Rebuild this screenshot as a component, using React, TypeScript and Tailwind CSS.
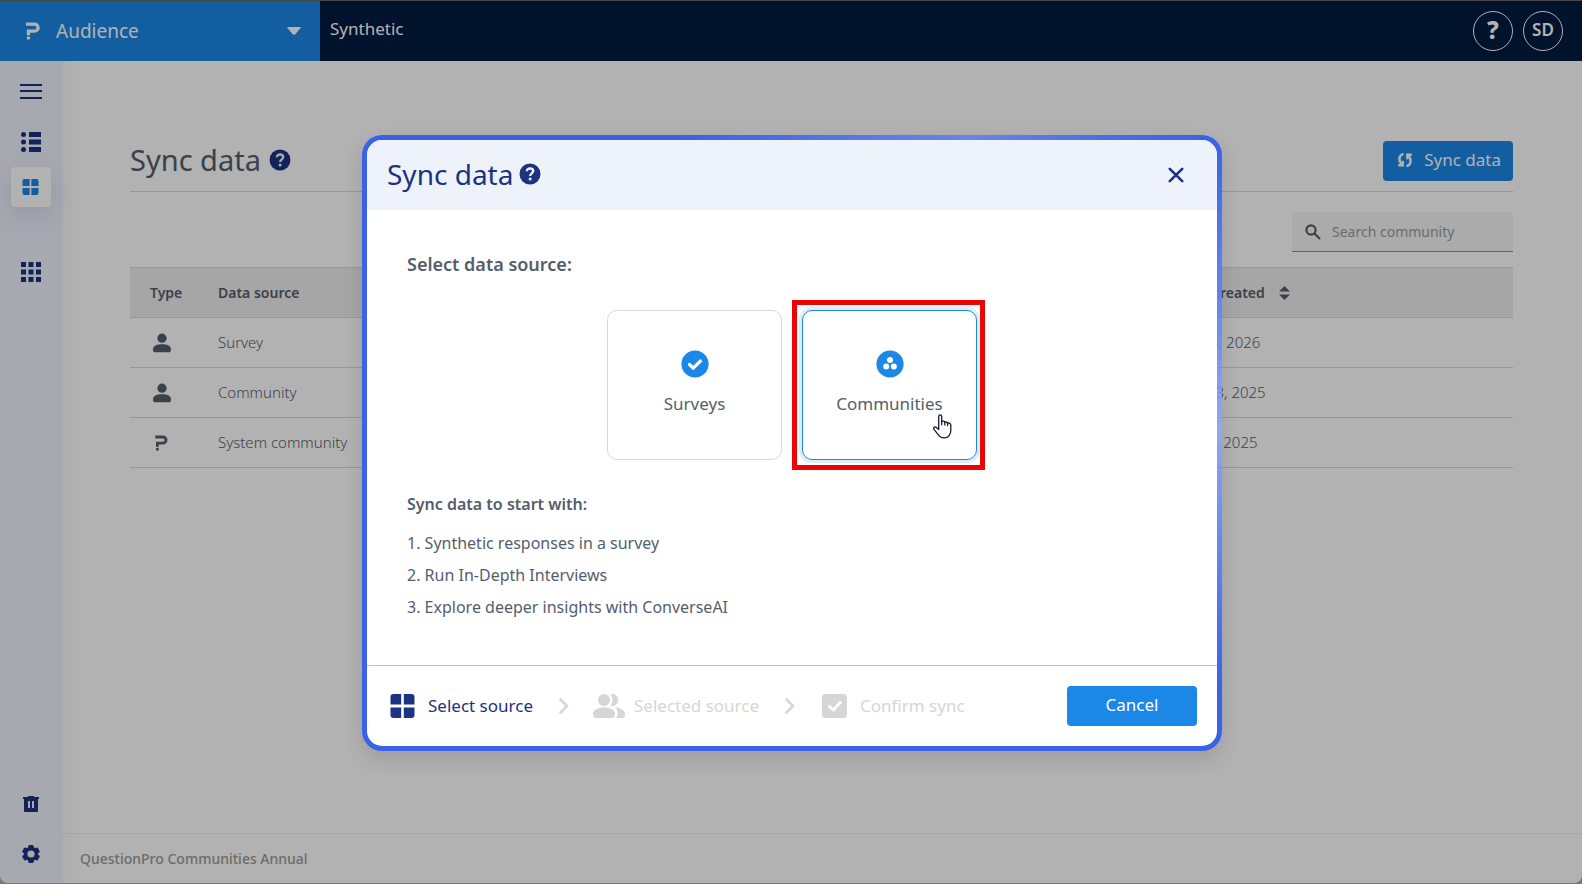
import React from "react";

type IconProps = { className?: string };

const HelpDot = ({ className }: IconProps) => (
  <svg viewBox="0 0 22 22" className={className} fill="none" aria-hidden="true">
    <circle cx="11" cy="11" r="10.5" fill="currentColor" />
    <path d="M7.900 8.300C7.900 6.400 9.300 5.500 11 5.500s3.200.9 3.200 2.600c0 2.200-3 2.300-3 4.800" className="stroke-[#eef2fb]" strokeWidth="2.400" />
    <circle cx="11.1" cy="15.900" r="1.500" className="fill-[#eef2fb]" />
  </svg>
);

const Logo = ({ className }: IconProps) => (
  <svg viewBox="0 0 14 18" className={className} fill="none" aria-hidden="true">
    <path d="M0 2.200h8.600a3.500 3.500 0 0 1 0 7H2.400v4" stroke="currentColor" strokeWidth="3.200" />
    <rect x="0.800" y="14.400" width="3.200" height="3.200" rx="1.200" fill="currentColor" />
  </svg>
);

const Tiles = ({ className }: IconProps) => (
  <svg viewBox="0 0 24 24" className={className} fill="currentColor" aria-hidden="true">
    <path d="M3 0h7.700v10.400H0V3a3 3 0 0 1 3-3zM13.300 0H21a3 3 0 0 1 3 3v7.400H13.300zM0 13.600h10.700V24H3a3 3 0 0 1-3-3zM13.300 13.600H24V21a3 3 0 0 1-3 3h-7.700z" />
  </svg>
);

const Person = ({ className }: IconProps) => (
  <svg viewBox="0 0 18 20" className={className} fill="currentColor" aria-hidden="true">
    <circle cx="9" cy="5.200" r="4.600" />
    <path d="M0 16.500C0 12.500 4 11.200 9 11.200s9 1.300 9 5.300c0 2-.8 2.800-2.500 2.800h-13C.8 19.300 0 18.500 0 16.500z" />
  </svg>
);

const HandCursor = ({ className }: IconProps) => (
  <svg viewBox="0 0 19 25" className={className} fill="#fff" stroke="#1a1a2e" strokeWidth="1.300" strokeLinejoin="round" strokeLinecap="round" aria-hidden="true">
    <path d="M5.700 15.500V2.600c0-2.400 3-2.400 3 0v4.900c1.600-.8 2.700-.3 3.100.7 1.300-.5 2.300-.1 2.800.9 1.900-.4 3.200.5 3.200 2.200v5.200c0 2.500-.7 3.600-1.600 5-1 1.600-2.800 2.400-5.200 2.400-3 0-4.600-1.300-6-3.500L1 15.300c-1-1.700.7-3 2.300-1.900z" />
    <path d="M8.700 7.500v3.300M11.800 8.200v2.800M14.600 9.100v2.500" />
  </svg>
);

const rows = [
  { type: "person", source: "Survey", created: "Jan 15, 2026" },
  { type: "person", source: "Community", created: "Dec 23, 2025" },
  { type: "logo", source: "System community", created: "Nov 7, 2025" },
];

const Chevron = () => (
  <svg viewBox="0 0 10 16" className="h-4 w-[10px] text-[#d6d6d6]" fill="none" aria-hidden="true">
    <path d="M1.500 1.500 8 8l-6.500 6.500" stroke="currentColor" strokeWidth="2.600" strokeLinecap="round" />
  </svg>
);

export default function App() {
  return (
    <div className="relative h-screen overflow-hidden bg-[#ababab] font-['Noto_Sans',sans-serif] text-[#545e6b]">
      <div className="flex h-full flex-col border-t border-[#686868] pb-px">
        <header className="flex h-[60px] shrink-0 bg-[#001a3f] text-white">
          <button className="flex w-80 items-center bg-[#1b87e6] pl-[26px] pr-[19px]">
            <Logo className="h-[18px] w-[14px]" />
            <span className="ml-4 text-[19px]">Audience</span>
            <svg viewBox="0 0 14 8" className="ml-auto h-2 w-[14px]" fill="currentColor" aria-hidden="true">
              <path d="M1 0h12c1 0 1 .8.500 1.300L8 7.400c-.6.600-1.400.6-2 0L.5 1.300C0 .8 0 0 1 0z" />
            </svg>
          </button>
          <span className="pl-[10px] pt-4 text-[17px] leading-6">Synthetic</span>
          <div className="ml-auto flex items-center gap-[10px] pr-[19px]">
            <button className="flex size-10 items-center justify-center rounded-full border border-white pb-0.5 text-[24px] font-extrabold" aria-label="Help">?</button>
            <button className="size-10 rounded-full border border-white pb-0.5 text-[17px] font-semibold">SD</button>
          </div>
        </header>
        <div className="flex min-h-0 flex-1 overflow-hidden rounded-b-lg bg-white">
          <nav className="flex w-[63px] shrink-0 flex-col items-center bg-[#eef2fb] pb-5 pr-[2px] text-[#1b3380] shadow-[0_0_24px_rgba(27,51,128,0.06)]">
            <button aria-label="Menu" className="mt-[23px]">
              <svg viewBox="0 0 22 15" className="h-[15px] w-[22px]" fill="currentColor"><path d="M0 0h22v2H0zM0 6h22v2H0zM0 13h22v2H0z" /></svg>
            </button>
            <button aria-label="List" className="mt-[33px]">
              <svg viewBox="0 0 20 20" className="size-5" fill="currentColor">
                <circle cx="2.500" cy="2.500" r="2.500" /><circle cx="2.500" cy="10" r="2.500" /><circle cx="2.500" cy="17.500" r="2.500" />
                <path d="M8 0h12v5H8zM8 7.500h12v5H8zM8 15h12v5H8z" />
              </svg>
            </button>
            <button aria-label="Dashboard" className="mt-[15px] flex size-10 items-center justify-center rounded bg-white text-[#1b87e6] shadow-[0_8px_24px_rgba(27,51,128,0.12)]">
              <Tiles className="h-4 w-[17px]" />
            </button>
            <button aria-label="Apps" className="mt-[55px]">
              <svg viewBox="0 0 20 20" className="size-5" fill="currentColor">
                <path d="M0 0h5v5H0zM7.500 0h5v5h-5zM15 0h5v5h-5zM0 7.500h5v5H0zM7.500 7.500h5v5h-5zM15 7.500h5v5h-5zM0 15h5v5H0zM7.500 15h5v5h-5zM15 15h5v5h-5z" />
              </svg>
            </button>
            <button aria-label="Trash" className="mt-auto">
              <svg viewBox="0 0 16 16" className="size-4" fill="currentColor">
                <path fillRule="evenodd" d="M0 1h5V0h6v1h5v2h-1v12a1 1 0 0 1-1 1H2a1 1 0 0 1-1-1V3H0zM5 5v7h2V5zM9 5v7h2V5z" />
              </svg>
            </button>
            <button aria-label="Settings" className="mt-[33px]">
              <svg viewBox="0 0 18 18" className="size-[18px]" aria-hidden="true">
                <g fill="currentColor">
                  <circle cx="9" cy="9" r="7.200" />
                  <rect x="6.200" y="0" width="5.600" height="18" rx="1.500" />
                  <rect x="6.200" y="0" width="5.600" height="18" rx="1.500" transform="rotate(60 9 9)" />
                  <rect x="6.200" y="0" width="5.600" height="18" rx="1.500" transform="rotate(120 9 9)" />
                </g>
                <circle cx="9" cy="9" r="3.600" className="fill-[#eef2fb]" />
              </svg>
            </button>
          </nav>
          <div className="flex min-w-0 flex-1 flex-col">
            <main className="flex-1 pl-[67px] pr-[69px] pt-20">
              <div className="flex h-[51px] items-start justify-between border-b border-[#d9d9d9]">
                <h1 className="flex items-center text-[29px] leading-[38px]">
                  Sync data
                  <HelpDot className="ml-2 size-[22px] text-[#1b3380]" />
                </h1>
                <button className="flex h-10 items-center rounded bg-[#1b87e6] pb-0.5 pl-[14px] pr-3 text-[17px] text-white">
                  <svg viewBox="0 0 16 16" className="mr-[11px] size-4" fill="none" stroke="currentColor" strokeWidth="2.400" aria-hidden="true">
                    <path d="M6.500 1.800C1.500 3 1.500 9 4.500 12M9.500 14.200c5-1.200 5-7.200 2-10.200" />
                    <path d="M1.200 13.200h4.500V8.800M14.800 2.800h-4.500v4.400" />
                  </svg>
                  Sync data
                </button>
              </div>
              <div className="flex justify-end pb-[15px] pt-5">
                <label className="flex h-10 w-[221px] items-center rounded-t border-b border-[#8f8f8f] bg-[#f5f5f5] pl-[13px]">
                  <svg viewBox="0 0 16 16" className="size-4 shrink-0" fill="none" stroke="currentColor" strokeWidth="2.200" aria-hidden="true">
                    <circle cx="6" cy="6" r="4.600" /><path d="m9.500 9.500 5.500 5.500" />
                  </svg>
                  <input aria-label="Search community" placeholder="Search community" className="ml-[11px] w-full min-w-0 bg-transparent text-sm outline-none placeholder:text-[#9b9b9b]" />
                </label>
              </div>
              <table className="w-full table-fixed border-collapse text-left">
                <colgroup><col className="w-[68px]" /><col /><col className="w-[336px]" /></colgroup>
                <thead>
                  <tr className="h-[50px] border-y border-[#d9d9d9] bg-[#eeeeee] text-sm">
                    <th className="pl-5 font-semibold">Type</th>
                    <th className="pl-5 font-semibold">Data source</th>
                    <th className="font-semibold">
                      <span className="flex items-center">
                        Date created
                        <svg viewBox="0 0 10 14" className="ml-[14px] h-[14px] w-[11px]" preserveAspectRatio="none" fill="currentColor" aria-hidden="true"><path d="M5 0l5 5.500H0zM5 14l5-5.500H0z" /></svg>
                      </span>
                    </th>
                  </tr>
                </thead>
                <tbody>
                  {rows.map((r) => (
                    <tr key={r.source} className="h-[50px] border-b border-[#d9d9d9]">
                      <td className="pl-[23px]">{r.type === "person" ? <Person className="h-5 w-[18px]" /> : <Logo className="ml-[2px] h-4 w-[13px]" />}</td>
                      <td className="pl-5 text-[15px] font-light">{r.source}</td>
                      <td className="text-[15px] font-light">{r.created}</td>
                    </tr>
                  ))}
                </tbody>
              </table>
            </main>
            <footer className="h-[50px] border-t border-[#eeeeee] pl-[17px] text-sm font-medium leading-[50px] text-[#9b9b9b]">QuestionPro Communities Annual</footer>
          </div>
        </div>
      </div>

      <div className="absolute inset-0 flex items-start justify-center bg-black/30 pl-[2px] pt-[135px]">
        <div role="dialog" aria-modal="true" aria-label="Sync data" className="w-[860px] max-w-full rounded-[20px] bg-[conic-gradient(from_-20deg,#3a62e8,rgba(80,118,245,0.75)_51deg,#3a62e8_74deg,rgba(140,165,255,0.75)_108deg,#3a62e8_140deg,#3a62e8)] p-[5px] shadow-[0_8px_20px_rgba(0,0,0,0.12)]">
          <div className="overflow-hidden rounded-[15px] bg-white">
            <div className="flex h-[70px] items-center justify-between bg-[#eef2fb] pl-5 pr-[33px] text-[#1b3380]">
              <h2 className="flex items-center pb-0.5 text-[28px]">
                Sync data
                <HelpDot className="ml-[6px] size-[22px]" />
              </h2>
              <button aria-label="Close">
                <svg viewBox="0 0 16 16" className="size-4" stroke="currentColor" strokeWidth="2.600" strokeLinecap="round"><path d="M1.800 1.800l12.400 12.400M14.200 1.800 1.800 14.200" /></svg>
              </button>
            </div>
            <div className="px-10 pb-[42px] pt-10">
              <p className="text-lg font-semibold leading-7">Select data source:</p>
              <div className="mt-[22px] flex justify-center gap-[10px]">
                <div className="py-[10px] pl-2">
                  <button className="flex h-[150px] w-[175px] flex-col items-center rounded-[10px] border border-[#d9d9d9] pt-[39px]">
                    <svg viewBox="0 0 28 28" className="size-7" fill="none" aria-hidden="true"><circle cx="14" cy="14" r="13.600" fill="#1b87e6" /><path d="m8.500 14.500 3.700 3.700 7.300-7.200" stroke="#fff" strokeWidth="3.200" strokeLinecap="round" strokeLinejoin="round" /></svg>
                    <span className="mt-[14px] text-[17px] leading-6">Surveys</span>
                  </button>
                </div>
                <div className="relative border-[5px] border-[#eb0505] p-[5px] pr-[3px]">
                  <button className="flex h-[150px] w-[175px] flex-col items-center rounded-[10px] border border-[#1b87e6] pt-[39px] shadow-[0_0_0_3px_rgba(27,135,230,0.15)]">
                    <svg viewBox="0 0 28 28" className="size-7" fill="#fff" aria-hidden="true"><circle cx="14" cy="14" r="13.600" fill="#1b87e6" /><circle cx="14" cy="10" r="3" /><circle cx="10.200" cy="16.600" r="3" /><circle cx="17.800" cy="16.600" r="3" /></svg>
                    <span className="mt-[14px] text-[17px] leading-6">Communities</span>
                  </button>
                  <HandCursor className="absolute left-[136px] top-[109px] h-[25px] w-[19px]" />
                </div>
              </div>
              <p className="mt-5 text-base font-semibold leading-7">Sync data to start with:</p>
              <ol className="mt-[9px] text-base leading-8">
                <li>1. Synthetic responses in a survey</li>
                <li>2. Run In-Depth Interviews</li>
                <li>3. Explore deeper insights with ConverseAI</li>
              </ol>
            </div>
            <div className="flex h-[81px] items-center border-t border-[#b4c3f6] pl-[23px] pr-5 text-[17px] text-[#d6d6d6]">
              <Tiles className="h-6 w-[25px] text-[#1b3380]" />
              <span className="ml-[13px] mr-[26px] text-[#1b3380]">Select source</span>
              <Chevron />
              <svg viewBox="0 0 32 24" className="ml-6 h-6 w-8" fill="currentColor" aria-hidden="true">
                <circle cx="11" cy="6" r="6" />
                <path d="M0 20.500C0 15.500 5 13.500 11 13.500s11 2 11 7c0 2.300-1 3.500-3 3.500H3c-2 0-3-1.200-3-3.500zM17.500.3a6 6 0 1 1 0 11.400c2.600-3.200 2.600-8.200 0-11.400zM22 13.600c5.500.4 10 2.400 10 6.900 0 2.300-1 3.500-3 3.500h-6c2.500-3.500 2-7.900-1-10.400z" />
              </svg>
              <span className="ml-[9px] mr-[26px]">Selected source</span>
              <Chevron />
              <svg viewBox="0 0 25 24" className="ml-[27px] h-6 w-[25px]" fill="none" aria-hidden="true"><rect width="25" height="24" rx="3" fill="currentColor" /><path d="m7.500 12.500 3.800 3.500 7-7.500" stroke="#fff" strokeWidth="3" strokeLinecap="round" strokeLinejoin="round" /></svg>
              <span className="ml-[13px]">Confirm sync</span>
              <button className="ml-auto h-10 w-[130px] rounded bg-[#1b87e6] pb-0.5 text-white">Cancel</button>
            </div>
          </div>
        </div>
      </div>
    </div>
  );
}
